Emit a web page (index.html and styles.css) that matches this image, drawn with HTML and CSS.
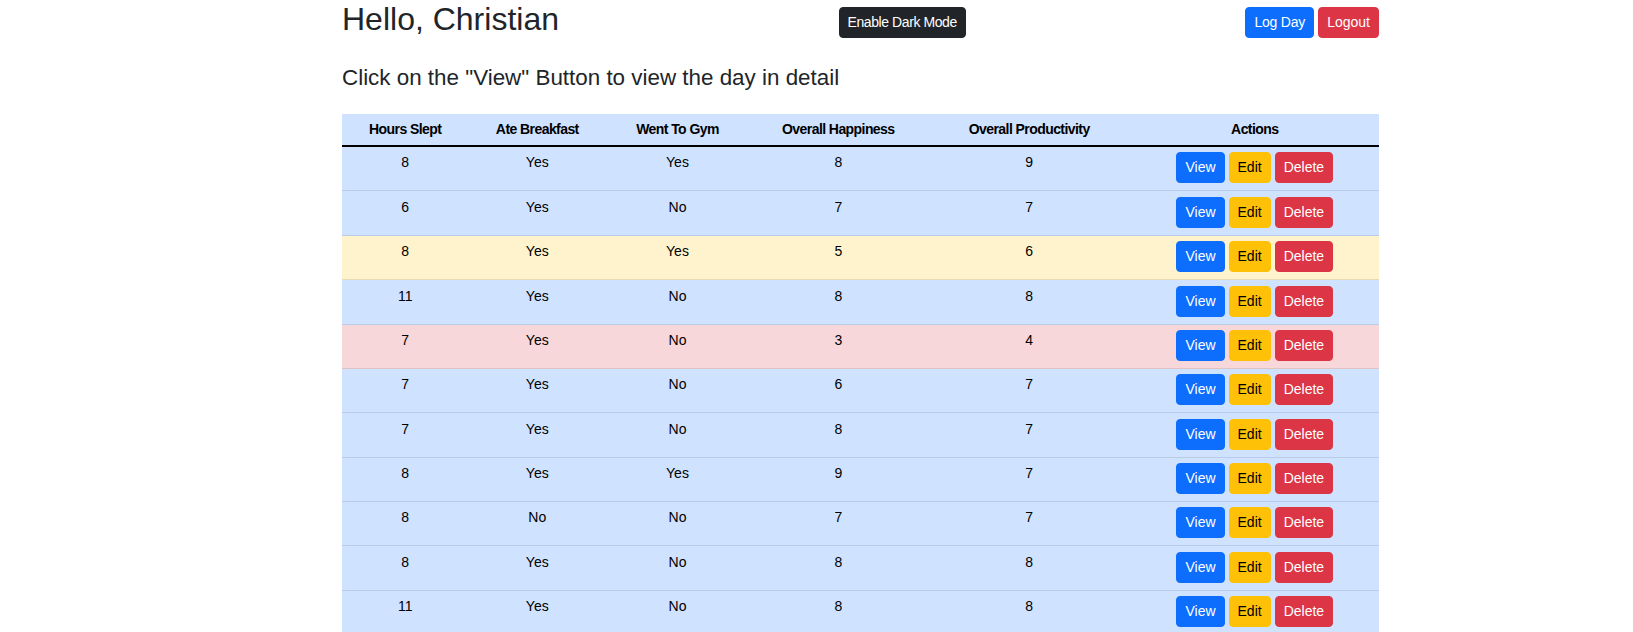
FILE: index.html
```html
<!DOCTYPE html>
<html lang="en">
<head>
<meta charset="utf-8">
<title>Days</title>
<link rel="stylesheet" href="styles.css">
</head>
<body>
<div class="page">
  <div class="topbar">
    <h2 class="greeting">Hello, Christian</h2>
    <button class="btn btn-dark btn-tight">Enable Dark Mode</button>
    <div class="btn-group">
      <button class="btn btn-primary btn-snug">Log Day</button>
      <button class="btn btn-danger">Logout</button>
    </div>
  </div>
  <h4 class="subtitle">Click on the "View" Button to view the day in detail</h4>
  <table class="days">
    <colgroup>
      <col class="c1"><col class="c2"><col class="c3"><col class="c4"><col class="c5"><col class="c6">
    </colgroup>
    <thead>
      <tr><th>Hours Slept</th><th>Ate Breakfast</th><th>Went To Gym</th><th>Overall Happiness</th><th>Overall Productivity</th><th>Actions</th></tr>
    </thead>
    <tbody>
      <tr class="row-primary"><td>8</td><td>Yes</td><td>Yes</td><td>8</td><td>9</td><td><div class="actions"><button class="btn btn-primary">View</button><button class="btn btn-warning">Edit</button><button class="btn btn-danger">Delete</button></div></td></tr>
      <tr class="row-primary"><td>6</td><td>Yes</td><td>No</td><td>7</td><td>7</td><td><div class="actions"><button class="btn btn-primary">View</button><button class="btn btn-warning">Edit</button><button class="btn btn-danger">Delete</button></div></td></tr>
      <tr class="row-warning"><td>8</td><td>Yes</td><td>Yes</td><td>5</td><td>6</td><td><div class="actions"><button class="btn btn-primary">View</button><button class="btn btn-warning">Edit</button><button class="btn btn-danger">Delete</button></div></td></tr>
      <tr class="row-primary"><td>11</td><td>Yes</td><td>No</td><td>8</td><td>8</td><td><div class="actions"><button class="btn btn-primary">View</button><button class="btn btn-warning">Edit</button><button class="btn btn-danger">Delete</button></div></td></tr>
      <tr class="row-danger"><td>7</td><td>Yes</td><td>No</td><td>3</td><td>4</td><td><div class="actions"><button class="btn btn-primary">View</button><button class="btn btn-warning">Edit</button><button class="btn btn-danger">Delete</button></div></td></tr>
      <tr class="row-primary"><td>7</td><td>Yes</td><td>No</td><td>6</td><td>7</td><td><div class="actions"><button class="btn btn-primary">View</button><button class="btn btn-warning">Edit</button><button class="btn btn-danger">Delete</button></div></td></tr>
      <tr class="row-primary"><td>7</td><td>Yes</td><td>No</td><td>8</td><td>7</td><td><div class="actions"><button class="btn btn-primary">View</button><button class="btn btn-warning">Edit</button><button class="btn btn-danger">Delete</button></div></td></tr>
      <tr class="row-primary"><td>8</td><td>Yes</td><td>Yes</td><td>9</td><td>7</td><td><div class="actions"><button class="btn btn-primary">View</button><button class="btn btn-warning">Edit</button><button class="btn btn-danger">Delete</button></div></td></tr>
      <tr class="row-primary"><td>8</td><td>No</td><td>No</td><td>7</td><td>7</td><td><div class="actions"><button class="btn btn-primary">View</button><button class="btn btn-warning">Edit</button><button class="btn btn-danger">Delete</button></div></td></tr>
      <tr class="row-primary"><td>8</td><td>Yes</td><td>No</td><td>8</td><td>8</td><td><div class="actions"><button class="btn btn-primary">View</button><button class="btn btn-warning">Edit</button><button class="btn btn-danger">Delete</button></div></td></tr>
      <tr class="row-primary"><td>11</td><td>Yes</td><td>No</td><td>8</td><td>8</td><td><div class="actions"><button class="btn btn-primary">View</button><button class="btn btn-warning">Edit</button><button class="btn btn-danger">Delete</button></div></td></tr>
    </tbody>
  </table>
</div>
</body>
</html>
```

FILE: styles.css
```css
* { box-sizing: border-box; }

body {
  margin: 0;
  font-family: "Liberation Sans", Arial, sans-serif;
  color: #212529;
  background: #fff;
}

.page {
  margin-left: 342px;
  width: 1037px;
}

.topbar {
  display: flex;
  justify-content: space-between;
  align-items: center;
}

.greeting {
  margin: 0 0 6px;
  font-size: 32px;
  line-height: 1.2;
  font-weight: 500;
}

.btn-group {
  display: flex;
  gap: 4px;
}

.btn {
  display: inline-block;
  font-family: "Liberation Sans", Arial, sans-serif;
  font-size: 14px;
  line-height: 21px;
  font-weight: 400;
  padding: 4px 8px;
  border: 1px solid transparent;
  border-radius: 4px;
  color: #fff;
  cursor: pointer;
}

.btn-tight { letter-spacing: -0.42px; }
.btn-snug { letter-spacing: -0.2px; }

.btn-dark { background: #212529; border-color: #212529; }
.btn-primary { background: #0d6efd; border-color: #0d6efd; }
.btn-danger { background: #dc3545; border-color: #dc3545; }
.btn-warning { background: #ffc107; border-color: #ffc107; color: #000; }

.subtitle {
  margin: 20.8px 0 21.9px;
  font-size: 22.4px;
  line-height: 1.2;
  font-weight: 500;
}

.days {
  width: 100%;
  border-collapse: collapse;
  table-layout: fixed;
  font-size: 14px;
  line-height: 21px;
  color: #000;
}

.c1 { width: 126.4px; }
.c2 { width: 137.8px; }
.c3 { width: 142.6px; }
.c4 { width: 179px; }
.c5 { width: 202.8px; }
.c6 { width: 248.4px; }

.days thead th {
  background: #cfe2ff;
  padding: 5px 4px;
  font-weight: 700;
  text-align: center;
  letter-spacing: -0.57px;
}

.days tbody {
  border-top: 2px solid #000;
}

.days td {
  padding: 5.4px 4px 7px;
  text-align: center;
  vertical-align: top;
  border-bottom: 1px solid;
}

.row-primary td { background: #cfe2ff; border-bottom-color: #bacbe6; }
.row-warning td { background: #fff3cd; border-bottom-color: #e6dbb9; }
.row-danger td { background: #f8d7da; border-bottom-color: #dfc2c4; }

.actions {
  display: flex;
  justify-content: center;
  gap: 4px;
}
```
